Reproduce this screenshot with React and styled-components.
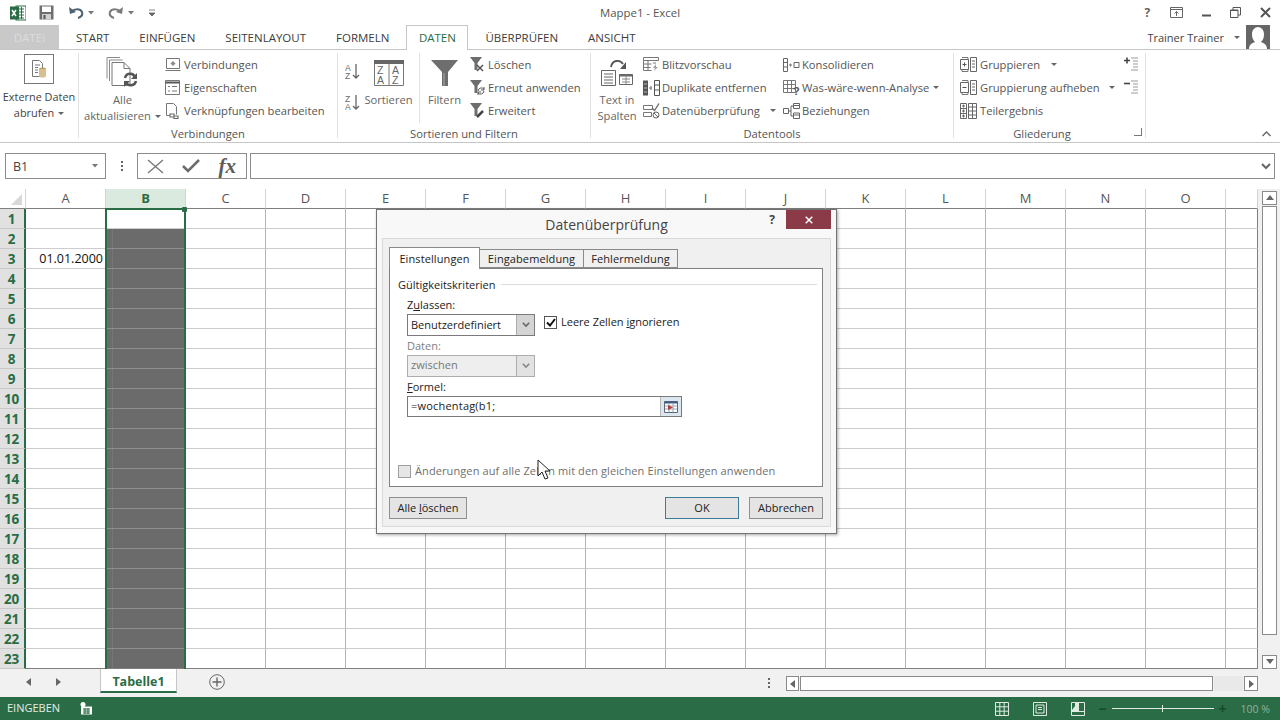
import styled, { createGlobalStyle } from 'styled-components';

const GlobalStyle = createGlobalStyle`
  html, body {
    margin: 0;
    padding: 0;
    background: #fff;
  }
  body {
    font-family: "Open Sans", "Liberation Sans", sans-serif;
    color: #444;
    overflow: hidden;
  }
`;

const green = '#2a6c45';

const Window = styled.div`
  position: relative;
  width: 1280px;
  height: 720px;
  display: flex;
  flex-direction: column;
  overflow: hidden;
  background: #fff;
  font-size: 11.2px;
`;

/* title bar */
const TitleBar = styled.div`
  height: 25px;
  display: grid;
  grid-template-columns: 1fr auto 1fr;
  align-items: center;
`;

const Qat = styled.div`
  display: grid;
  grid-template-columns: 29px 29px 40px 40px auto;
  padding-left: 10px;
  align-items: center;
`;

const QatItem = styled.div`
  display: flex;
  align-items: center;
  gap: 4px;
`;

const WindowTitle = styled.div`
  font-size: 11.4px;
  color: #555;
`;

const WindowButtons = styled.div`
  display: flex;
  justify-content: flex-end;
  align-items: center;
`;

const WindowButton = styled.span`
  width: 29.5px;
  display: flex;
  align-items: center;
  justify-content: center;
  font-weight: 700;
  font-size: 12px;
  color: #666;
`;

/* tabs */
const TabRow = styled.div`
  height: 25px;
  box-sizing: border-box;
  border-bottom: 1px solid #c6c6c6;
  display: flex;
  align-items: stretch;
  font-size: 11.5px;
`;

const FileTab = styled.div`
  width: 59px;
  background: #c9c9c9;
  color: #dcdcdc;
  display: flex;
  align-items: center;
  justify-content: center;
`;

const RibbonTab = styled.div`
  display: flex;
  align-items: center;
  padding: 0 ${({ $active }) => ($active ? '11.5px' : '15px')};
  margin-left: ${({ $ml }) => $ml || 0}px;
  color: #3c3c3c;
  ${({ $active }) => $active && `
    background: #fff;
    box-sizing: border-box;
    border: 1px solid #c6c6c6;
    border-bottom: none;
    height: 25px;
    padding-bottom: 2px;
    color: ${green};
  `}
`;

const UserBox = styled.div`
  margin-left: auto;
  display: flex;
  align-items: center;
  padding-right: 10px;
  gap: 6px;
  font-size: 11px;
  color: #444;
`;

/* ribbon */
const Ribbon = styled.div`
  height: 93px;
  box-sizing: border-box;
  border-bottom: 1px solid #c6c6c6;
  display: flex;
`;

const Group = styled.div`
  position: relative;
  box-sizing: border-box;
  width: ${({ $w }) => $w}px;
  margin: 3px 0 4px;
  border-right: 1px solid #e2e2e2;
  display: flex;
  flex-direction: column;
`;

const GroupBody = styled.div`
  height: 69px;
  display: flex;
  padding-left: ${({ $pl }) => $pl || 0}px;
  margin-bottom: 4px;
`;

const GroupLabel = styled.div`
  height: 16px;
  line-height: 16px;
  text-align: center;
  color: #555;
  padding-right: ${({ $pr }) => $pr || 0}px;
`;

const Launcher = styled.div`
  position: absolute;
  right: 3px;
  bottom: 2px;
  width: 7px;
  height: 7px;
  border-right: 1px solid #777;
  border-bottom: 1px solid #777;
`;

const LargeButton = styled.div`
  width: ${({ $w }) => $w}px;
  flex: none;
  display: flex;
  flex-direction: column;
  align-items: center;
  line-height: 16px;
  text-align: center;
  color: ${({ $dark }) => ($dark ? '#444' : '#666')};
  font-size: ${({ $dark }) => ($dark ? '10.9px' : 'inherit')};
  white-space: nowrap;
`;

const IconSlot = styled.div`
  height: ${({ $h }) => $h || 39}px;
  flex: none;
  display: flex;
  align-items: center;
  justify-content: center;
`;

const IconFrame = styled.div`
  width: 30px;
  height: 30px;
  box-sizing: border-box;
  border: 1px solid #777;
  margin-bottom: 4px;
  display: flex;
  align-items: center;
  justify-content: center;
`;

const SmallCol = styled.div`
  width: ${({ $w }) => ($w ? `${$w}px` : 'auto')};
  flex: none;
  margin-left: ${({ $ml }) => $ml || 0}px;
  display: flex;
  flex-direction: column;
`;

const SmallRow = styled.div`
  height: 23px;
  display: flex;
  align-items: center;
  color: #555;
  white-space: nowrap;
`;

const SmallIcon = styled.span`
  width: ${({ $w }) => $w || 19}px;
  flex: none;
  display: flex;
  align-items: center;
`;

const Caret = styled.i`
  display: inline-block;
  width: 0;
  height: 0;
  margin-left: ${({ $ml }) => $ml || 4}px;
  vertical-align: 2px;
  border-left: 3px solid transparent;
  border-right: 3px solid transparent;
  border-top: 3px solid #666;
`;

const SortCol = styled.div`
  width: 20px;
  flex: none;
  display: flex;
  flex-direction: column;
  gap: 14px;
  padding-top: 10px;
`;

const InnerSep = styled.div`
  width: 1px;
  height: 70px;
  margin: 0 8px 0 7px;
  background: #e2e2e2;
`;

const CollapseSlot = styled.div`
  flex: 1;
  display: flex;
  align-items: flex-end;
  justify-content: flex-end;
  padding: 0 9px 5px 0;
`;

/* formula bar */
const FormulaBar = styled.div`
  height: 45px;
  box-sizing: border-box;
  padding: 10px 5px 9px;
  display: flex;
  align-items: stretch;
`;

const NameBox = styled.div`
  width: 101px;
  box-sizing: border-box;
  border: 1px solid #8c8c8c;
  padding: 0 7px;
  display: flex;
  align-items: center;
  justify-content: space-between;
  font-size: 12.5px;
  color: #444;
`;

const Dots = styled.div`
  width: 31px;
  display: flex;
  flex-direction: column;
  align-items: center;
  justify-content: center;
  gap: 2px;
  i {
    width: 2px;
    height: 2px;
    background: #666;
  }
`;

const FormulaButtons = styled.div`
  width: 110px;
  box-sizing: border-box;
  border: 1px solid #8c8c8c;
  display: flex;
  align-items: center;
  justify-content: space-between;
  padding: 0 10px 0 9px;
`;

const FxMark = styled.span`
  font-family: "Liberation Serif", serif;
  font-style: italic;
  font-weight: 700;
  font-size: 21px;
  color: #5c5c5c;
`;

const FormulaInput = styled.div`
  flex: 1;
  margin-left: 3px;
  box-sizing: border-box;
  border: 1px solid #8c8c8c;
  display: flex;
  align-items: center;
  justify-content: flex-end;
  padding-right: 3px;
`;

/* sheet */
const SheetArea = styled.div`
  margin-top: 1px;
  height: 480px;
  display: flex;
`;

const Sheet = styled.div`
  position: relative;
  width: 1258px;
  height: 480px;
  box-sizing: border-box;
  display: grid;
  grid-template-columns: 26px repeat(15, 80px) 32px;
  grid-auto-rows: 20px;
  overflow: hidden;
`;

const Corner = styled.div`
  box-sizing: border-box;
  border-bottom: 1px solid #7f7f7f;
  border-right: 1px solid #d4d4d4;
  display: flex;
  align-items: flex-end;
  justify-content: flex-end;
  padding: 0 3px 3px 0;
  &::after {
    content: '';
    width: 0;
    height: 0;
    border-left: 11px solid transparent;
    border-bottom: 11px solid #d8d8d8;
  }
`;

const ColHead = styled.div`
  box-sizing: border-box;
  border-bottom: 1px solid #7f7f7f;
  border-right: 1px solid #d4d4d4;
  padding-bottom: 2px;
  display: flex;
  align-items: center;
  justify-content: center;
  font-size: 13px;
  background: ${({ $active }) => ($active ? '#dbeadf' : '#fff')};
  color: ${({ $active }) => ($active ? green : '#555')};
  font-weight: ${({ $active }) => ($active ? 700 : 400)};
`;

const RowHead = styled.div`
  box-sizing: border-box;
  background: #e1e1e1;
  border-right: 2px solid ${green};
  border-bottom: 1px solid #c8c8c8;
  display: flex;
  align-items: center;
  justify-content: center;
  padding-right: 1px;
  color: ${green};
  font-weight: 700;
  font-size: 13.5px;
  letter-spacing: -0.3px;
`;

const Cell = styled.div`
  box-sizing: border-box;
  border-right: 1px solid #b4b4b4;
  border-bottom: 1px solid #cdcdcd;
  display: flex;
  align-items: center;
  justify-content: flex-end;
  padding-right: 2px;
  color: #111;
  font-size: 12.5px;
  white-space: nowrap;
  ${({ $dark }) => $dark && `
    background: linear-gradient(90deg, #6b6b6b 6px, #777 6px, #777 7px, #6b6b6b 7px);
    border-right-color: #6b6b6b;
    border-bottom-color: #8e8e8e;
  `}
  ${({ $last }) => $last && 'border-right: 1px solid #7f7f7f;'}
  ${({ $bottom }) => $bottom && 'border-bottom: 1px solid #7f7f7f;'}
`;

const SelectionFrame = styled.div`
  position: absolute;
  left: 105px;
  top: 19px;
  width: 81px;
  height: 461px;
  box-sizing: border-box;
  border: 2px solid ${green};
  border-bottom: none;
  pointer-events: none;
  &::after {
    content: '';
    position: absolute;
    right: -3px;
    top: -3px;
    width: 5px;
    height: 5px;
    background: ${green};
    border-radius: 1px;
  }
`;

const VScroll = styled.div`
  width: 22px;
  box-sizing: border-box;
  padding: 2px 3px 0 4px;
  background: #f1f1f1;
  display: flex;
  flex-direction: column;
`;

const ScrollButton = styled.div`
  box-sizing: border-box;
  width: ${({ $w }) => $w || 15}px;
  height: ${({ $h }) => $h || 14}px;
  flex: none;
  background: #fff;
  border: 1px solid #8a8a8a;
  display: flex;
  align-items: center;
  justify-content: center;
  margin-top: ${({ $mt }) => ($mt ? 'auto' : '0')};
`;

const VThumb = styled.div`
  box-sizing: border-box;
  width: 15px;
  height: 429px;
  margin-top: 1px;
  background: #fff;
  border: 1px solid #8a8a8a;
`;

/* sheet tabs */
const SheetBar = styled.div`
  height: 28px;
  background: #f1f1f1;
  display: flex;
  align-items: flex-start;
`;

const SheetNav = styled.div`
  width: 100px;
  height: 26px;
  box-sizing: border-box;
  padding-left: 25px;
  display: flex;
  align-items: center;
  gap: 21px;
`;

const SheetTab = styled.div`
  width: 77px;
  height: 24px;
  box-sizing: border-box;
  background: #fff;
  border: 1px solid #c6c6c6;
  border-top: none;
  border-bottom: 2px solid ${green};
  padding-top: 2px;
  display: flex;
  align-items: center;
  justify-content: center;
  font-weight: 700;
  font-size: 12.5px;
  color: ${green};
`;

const AddSheet = styled.div`
  margin: 5px 0 0 32px;
  display: flex;
`;

const SplitDots = styled(Dots)`
  width: 4px;
  height: 28px;
  margin: 0 15px 0 auto;
`;

const HScroll = styled.div`
  width: 472px;
  height: 15px;
  margin: 7px 22px 0 0;
  display: flex;
  gap: 1px;
`;

const HThumb = styled.div`
  box-sizing: border-box;
  width: 413px;
  background: #fff;
  border: 1px solid #8a8a8a;
`;

const HTrack = styled.div`
  flex: 1;
  background: #e9e9e9;
`;

/* status bar */
const StatusBar = styled.div`
  height: 23px;
  background: ${green};
  color: #e4eee8;
  font-size: 11px;
  display: flex;
  align-items: center;
  padding-left: 7px;
`;

const StatusText = styled.span`
  width: 73px;
  padding-bottom: 2px;
`;

const StatusRight = styled.div`
  margin-left: auto;
  display: flex;
  align-items: center;
  padding-right: 10px;
`;

const ViewIcons = styled.div`
  display: flex;
  gap: 24px;
  margin-right: 14px;
`;

const ZoomBar = styled.div`
  display: flex;
  align-items: center;
  gap: 2px;
  margin-right: 14px;
  color: #174a2c;
  font-size: 14px;
  font-weight: 700;
`;

const ZoomTrack = styled.div`
  position: relative;
  width: 102px;
  height: 1px;
  margin: 0 3px;
  background: #dfeae3;
  &::after {
    content: '';
    position: absolute;
    left: 50px;
    top: -3px;
    width: 1px;
    height: 7px;
    background: #dfeae3;
  }
`;

const ZoomValue = styled.span`
  color: #8fb29d;
  font-size: 10.5px;
`;

/* dialog */
const Dialog = styled.div`
  position: absolute;
  left: 376px;
  top: 209px;
  width: 461px;
  height: 325px;
  box-sizing: border-box;
  background: #f8f8f8;
  border: 1px solid #737373;
  box-shadow: 1px 1px 3px rgba(0, 0, 0, 0.35);
  display: flex;
  flex-direction: column;
  font-size: 11px;
  color: #222;
`;

const DialogHead = styled.div`
  height: 28px;
  display: grid;
  grid-template-columns: 1fr auto 1fr;
`;

const DialogTitle = styled.div`
  font-size: 14px;
  color: #444;
  line-height: 30px;
`;

const DialogControls = styled.div`
  display: flex;
  justify-content: flex-end;
  align-items: flex-start;
  padding-right: 5px;
`;

const DialogHelp = styled.span`
  font-weight: 700;
  font-size: 12px;
  line-height: 19px;
  margin-right: 11px;
  color: #444;
`;

const CloseButton = styled.div`
  width: 45px;
  height: 19px;
  background: #8b3b47;
  display: flex;
  align-items: center;
  justify-content: center;
`;

const DialogInner = styled.div`
  flex: 1;
  margin: 0 5px 6px;
  box-sizing: border-box;
  background: #f0f0f0;
  border: 1px solid #d9d9d9;
  padding: 8px 7px 0 6px;
  display: flex;
  flex-direction: column;
`;

const DlgTabs = styled.div`
  height: 21px;
  display: flex;
  align-items: flex-end;
  position: relative;
  z-index: 1;
`;

const DlgTab = styled.div`
  box-sizing: border-box;
  width: ${({ $w }) => $w}px;
  height: ${({ $active }) => ($active ? 22 : 19)}px;
  margin-bottom: ${({ $active }) => ($active ? -1 : 0)}px;
  background: ${({ $active }) => ($active ? '#fff' : '#f0f0f0')};
  border: 1px solid #8a8a8a;
  border-bottom: ${({ $active }) => ($active ? 'none' : '1px solid #8a8a8a')};
  border-left-width: ${({ $active }) => ($active ? 1 : 0)}px;
  display: flex;
  align-items: center;
  justify-content: center;
  letter-spacing: 0.1px;
`;

const DlgPanel = styled.div`
  height: 219px;
  box-sizing: border-box;
  background: #fff;
  border: 1px solid #808080;
  padding: 8px 5px 7px 8px;
  display: flex;
  flex-direction: column;
`;

const Legend = styled.div`
  height: 16px;
  box-sizing: border-box;
  padding-bottom: 2px;
  display: flex;
  align-items: center;
  gap: 6px;
  &::after {
    content: '';
    flex: 1;
    height: 1px;
    background: #dcdcdc;
  }
`;

const Fields = styled.div`
  padding: 2px 0 0 9px;
`;

const FieldLabel = styled.div`
  height: 16px;
  line-height: 16px;
  margin: 2px 0 1px;
  color: ${({ $off }) => ($off ? '#808080' : '#222')};
`;

const FieldRow = styled.div`
  display: flex;
  gap: 9px;
`;

const Select = styled.div`
  box-sizing: border-box;
  width: 128px;
  height: 22px;
  border: 1px solid #7a7a7a;
  background: ${({ $off }) => ($off ? '#eeeeee' : '#fff')};
  color: ${({ $off }) => ($off ? '#777' : '#222')};
  border-color: ${({ $off }) => ($off ? '#adadad' : '#7a7a7a')};
  display: flex;
  align-items: center;
  justify-content: space-between;
  padding-left: 3px;
`;

const FieldText = styled.span`
  padding-bottom: ${({ $raise }) => $raise || 2}px;
  letter-spacing: ${({ $spaced }) => ($spaced ? '0.2px' : '0')};
`;

const SelectArrow = styled.div`
  width: 17px;
  height: 100%;
  background: ${({ $off }) => ($off ? '#e2e2e2' : '#d4d4d4')};
  border-left: 1px solid #adadad;
  display: flex;
  align-items: center;
  justify-content: center;
`;

const CheckRow = styled.div`
  height: 16px;
  display: flex;
  align-items: center;
  gap: 4px;
  color: ${({ $off }) => ($off ? '#6f6f6f' : '#222')};
  margin-top: ${({ $bottom }) => ($bottom ? 'auto' : '0')};
  white-space: nowrap;
`;

const CheckText = styled.span`
  padding-bottom: 2px;
  letter-spacing: ${({ $wide }) => ($wide ? '0.1px' : '0')};
`;

const CheckBox = styled.span`
  box-sizing: border-box;
  width: 13px;
  height: 13px;
  flex: none;
  border: 1px solid ${({ $off }) => ($off ? '#9e9e9e' : '#555')};
  background: ${({ $off }) => ($off ? '#e6e6e6' : '#fff')};
  display: flex;
  align-items: center;
  justify-content: center;
`;

const FormulaField = styled.div`
  box-sizing: border-box;
  width: 275px;
  height: 21px;
  border: 1px solid #7a7a7a;
  display: flex;
  align-items: center;
  justify-content: space-between;
  padding-left: 3px;
  color: #222;
`;

const RefButton = styled.div`
  width: 20px;
  height: 100%;
  background: #dbe6ef;
  border-left: 1px solid #b5b5b5;
  display: flex;
  align-items: center;
  justify-content: center;
`;

const DlgFooter = styled.div`
  margin-top: 10px;
  display: flex;
  gap: 10px;
`;

const DlgButton = styled.div`
  box-sizing: border-box;
  width: ${({ $w }) => $w || 74}px;
  height: 22px;
  padding-bottom: 2px;
  background: #e4e4e4;
  border: 1px solid ${({ $primary }) => ($primary ? '#3b7c99' : '#8f8f8f')};
  display: flex;
  align-items: center;
  justify-content: center;
  margin-left: ${({ $push }) => ($push ? 'auto' : '0')};
  color: #222;
`;

const Pointer = styled.svg`
  position: absolute;
  left: 537px;
  top: 459px;
`;

/* icons */
const ExcelLogo = () => (
  <svg width="16" height="16" viewBox="0 0 16 16">
    <rect x="6" y="1" width="10" height="14" fill="#fff" stroke={green} />
    <path d="M9 4h5M9 7h5M9 10h5M9 13h5M11.500 2v12" stroke={green} strokeWidth="1" />
    <rect x="0" y="1.500" width="9" height="13" fill={green} />
    <path d="M2 5l4 6M6 5l-4 6" stroke="#fff" strokeWidth="1.500" />
  </svg>
);

const SaveIcon = () => (
  <svg width="15" height="15" viewBox="0 0 15 15">
    <path d="M0.500 0.500h14v14h-14z" fill="#6e6e6e" />
    <rect x="3" y="1.500" width="9" height="5.500" fill="#fff" />
    <rect x="3" y="9" width="9" height="5.500" fill="#cfcfcf" />
    <rect x="4.500" y="10" width="2" height="4" fill="#555" />
  </svg>
);

const UndoIcon = ({ flip }) => (
  <svg width="16" height="13" viewBox="0 0 16 13" style={flip ? { transform: 'scaleX(-1)' } : undefined}>
    <path d="M3 6c2-3 9-4 11 0c1 3-1 5-4 6" fill="none" stroke={flip ? '#7a7a7a' : '#4d6272'} strokeWidth="2" />
    <path d="M1 1l1 7l6-2z" fill={flip ? '#7a7a7a' : '#4d6272'} />
  </svg>
);

const QatMenu = () => (
  <svg width="8" height="8" viewBox="0 0 8 8">
    <path d="M1 1h6M1 4h6l-3 3z" fill="#666" stroke="#666" strokeWidth="0.800" />
  </svg>
);

const TinyCaret = () => (
  <svg width="6" height="4" viewBox="0 0 6 4">
    <path d="M0 0h6L3 3.500z" fill="#777" />
  </svg>
);

const RibbonOptions = () => (
  <svg width="13" height="11" viewBox="0 0 13 11">
    <path d="M0.500 0.500h12v10h-12zM0.500 2.500h12" fill="none" stroke="#666" />
    <path d="M6.500 9V4.500M4.500 6.500l2-2l2 2" fill="none" stroke="#666" />
  </svg>
);

const MinIcon = () => (
  <svg width="15" height="11" viewBox="0 0 15 11">
    <path d="M3 8.500h9" stroke="#555" strokeWidth="2" />
  </svg>
);

const RestoreIcon = () => (
  <svg width="11" height="11" viewBox="0 0 11 11">
    <path d="M0.500 3h7.500v7.500H0.500zM3 3V0.500h7.500V8H8" fill="none" stroke="#555" />
    <path d="M0.500 3.500H8" stroke="#555" />
  </svg>
);

const CloseIcon = ({ color = '#555', size = 11 }) => (
  <svg width={size} height={size} viewBox="0 0 11 11">
    <path d="M1 1l9 9M10 1l-9 9" stroke={color} strokeWidth="2" />
  </svg>
);

const Avatar = () => (
  <svg width="24" height="24" viewBox="0 0 24 24">
    <rect width="24" height="24" fill="#666" />
    <path d="M3 24c0-5 4-6 6-7c-2-2-3-4-3-8c0-4 3-7 6-7s6 3 6 7c0 4-1 6-3 8c2 1 6 2 6 7z" fill="#fff" />
  </svg>
);

const ExternalDataIcon = () => (
  <svg width="18" height="20" viewBox="0 0 18 20">
    <path d="M2.500 1.500h7l3 3v13h-10z" fill="#fff" stroke="#777" />
    <path d="M5 6h5M5 8.500h3M5 11h3M5 13.500h3" stroke="#777" />
    <ellipse cx="12.500" cy="10" rx="3.500" ry="1.500" fill="#b99b62" />
    <path d="M9 10h7v7c0 2-7 2-7 0z" fill="#d8bf8e" />
  </svg>
);

const RefreshAllIcon = () => (
  <svg width="33" height="33" viewBox="0 0 33 33">
    <path d="M1 1.500h13M1 1.500v21M3.500 4h13M3.500 4v21" fill="none" stroke="#8a8a8a" />
    <path d="M6 6.500h12l6 6v17H6z" fill="#fff" stroke="#777" />
    <path d="M18 6.500v6h6" fill="none" stroke="#777" />
    <path d="M19 22c1-5 8-6 10-1" fill="none" stroke="#555" strokeWidth="2.500" />
    <path d="M31 17v6h-6z" fill="#555" />
    <path d="M30 25c-1 5-8 6-10 1" fill="none" stroke="#555" strokeWidth="2.500" />
    <path d="M18 31v-6h6z" fill="#555" />
  </svg>
);

const ConnectionsIcon = () => (
  <svg width="16" height="14" viewBox="0 0 16 14">
    <path d="M1.500 0.500h13v10h-13zM0.500 12.500h15" fill="none" stroke="#777" />
    <path d="M8 3l2.500 2.500L8 8L5.500 5.500z" fill="#8a8a8a" />
  </svg>
);

const PropertiesIcon = () => (
  <svg width="15" height="15" viewBox="0 0 15 15">
    <path d="M0.500 0.500h14v14h-14z" fill="#fff" stroke="#777" />
    <path d="M0.500 2.500h14" stroke="#555" strokeWidth="2" />
    <path d="M3 6.500h2M3 11h2M7 6.500h5M7 11h5" stroke="#777" />
  </svg>
);

const EditLinksIcon = () => (
  <svg width="15" height="16" viewBox="0 0 15 16">
    <path d="M1.500 0.500h7l3 3v8M1.500 0.500v12h3" fill="none" stroke="#777" />
    <path d="M5 11h4v3H5zM9 13h4v2.500H9z" fill="none" stroke="#6a6a6a" strokeWidth="1.200" />
  </svg>
);

const SortGlyph = ({ top, bottom }) => (
  <svg width="16" height="17" viewBox="0 0 16 17">
    <text x="0" y="8" fontSize="8.500" fontFamily="Liberation Sans" fill="#6a6a6a">{top}</text>
    <text x="0" y="16" fontSize="8.500" fontFamily="Liberation Sans" fill="#6a6a6a">{bottom}</text>
    <path d="M11 1v14M8 12l3 3l3-3" fill="none" stroke="#666" strokeWidth="1.300" />
  </svg>
);

const SortDialogIcon = () => (
  <svg width="30" height="26" viewBox="0 0 30 26">
    <path d="M0.500 0.500h29v25h-29zM15 3v22" fill="#fff" stroke="#777" />
    <rect x="0" y="0" width="30" height="4" fill="#666" />
    <text x="3" y="14" fontSize="10.500" fontFamily="Liberation Sans" fill="#666">Z</text>
    <text x="3" y="24" fontSize="10.500" fontFamily="Liberation Sans" fill="#666">A</text>
    <text x="18" y="14" fontSize="10.500" fontFamily="Liberation Sans" fill="#666">A</text>
    <text x="18" y="24" fontSize="10.500" fontFamily="Liberation Sans" fill="#666">Z</text>
  </svg>
);

const FunnelIcon = () => (
  <svg width="29" height="28" viewBox="0 0 29 28">
    <path d="M1 1h27L18 13v14h-6V13z" fill="#6e6e6e" />
    <path d="M14 14v13" stroke="#a8a8a8" />
  </svg>
);

const SmallFunnel = ({ mark }) => (
  <svg width="16" height="17" viewBox="0 0 16 17">
    <path d="M0 1h12L7.500 7v7H4.500V7z" fill="#6e6e6e" />
    {mark === 'x' && <path d="M7 9l6 6M13 9l-6 6" stroke="#555" strokeWidth="1.500" />}
    {mark === 'r' && <path d="M8 12a3.500 3.500 0 0 1 6-2M14 12a3.500 3.500 0 0 1-6 2M14 8v3h-3M8 16v-3h3" fill="none" stroke="#555" />}
    {mark === 'p' && <path d="M7 15l6-6" stroke="#444" strokeWidth="2.500" />}
  </svg>
);

const TextColumnsIcon = () => (
  <svg width="32" height="28" viewBox="0 0 32 28">
    <path d="M10 8c1-7 9-8 12-3" fill="none" stroke="#555" strokeWidth="1.800" />
    <path d="M25 3v7h-6z" fill="#555" />
    <path d="M0.500 11.500h14v15h-14z" fill="#fff" stroke="#666" />
    <path d="M3 15h9M3 18h9M3 21h9M3 24h9" stroke="#666" />
    <path d="M18.500 15.500h13v10h-13z" fill="#fff" stroke="#666" />
    <path d="M18.500 16.500h13" stroke="#666" strokeWidth="2" />
    <path d="M25 16v9M21 20h8M21 23h8" stroke="#888" />
  </svg>
);

const FlashFillIcon = () => (
  <svg width="17" height="15" viewBox="0 0 17 15">
    <path d="M0.500 0.500h15v3h-15zM0.500 3.500v10h8M5 3.500v10M0.500 7h8M0.500 10.500h7M10 6h3" fill="none" stroke="#777" />
    <path d="M13 7l-3 4h2l-1 3l4-4h-2z" fill="#a0a0a0" />
  </svg>
);

const DuplicatesIcon = () => (
  <svg width="17" height="16" viewBox="0 0 17 16">
    <rect x="0" y="0.500" width="5" height="15" fill="#555" />
    <path d="M1 4h3M1 8h3M1 12h3" stroke="#bbb" />
    <path d="M6 8h3M8 6v4" stroke="#777" />
    <path d="M11.500 0.500h5v15h-5zM11.500 5h5M11.500 10h5" fill="#fff" stroke="#555" />
  </svg>
);

const ValidationIcon = () => (
  <svg width="17" height="16" viewBox="0 0 17 16">
    <path d="M0.500 2.500h9v4h-9zM0.500 9.500h8v4h-8z" fill="none" stroke="#777" />
    <path d="M9 5l2.500 2.500L16 0.500" fill="none" stroke="#666" strokeWidth="1.300" />
    <circle cx="13" cy="12" r="3" fill="#fff" stroke="#666" />
    <path d="M11 10l4 4" stroke="#666" />
  </svg>
);

const ConsolidateIcon = () => (
  <svg width="17" height="14" viewBox="0 0 17 14">
    <path d="M0.500 0.500h4v13h-4zM0.500 4.500h4M0.500 9h4" fill="none" stroke="#666" />
    <path d="M6 7h3M7.500 5.500v3" stroke="#777" />
    <path d="M11 4.500h5v5h-5z" fill="none" stroke="#666" />
  </svg>
);

const WhatIfIcon = () => (
  <svg width="17" height="15" viewBox="0 0 17 15">
    <path d="M0.500 0.500h12v12h-12zM0.500 4.500h12M0.500 8.500h12M4.500 0.500v12M8.500 0.500v12" fill="none" stroke="#777" />
    <text x="10" y="14.500" fontSize="11" fontWeight="700" fontFamily="Liberation Sans" fill="#555">?</text>
  </svg>
);

const RelationsIcon = () => (
  <svg width="17" height="16" viewBox="0 0 17 16">
    <path d="M0.500 5.500h5v5h-5zM10.500 0.500h6v5h-6zM10.500 10h6v5.500h-6zM10.500 2.500h6M10.500 12h6" fill="#fff" stroke="#666" />
    <path d="M5.500 8h2.500V3h2.500M8 8v5h2.500" fill="none" stroke="#666" />
  </svg>
);

const GroupIcon = ({ mark = '+' }) => (
  <svg width="17" height="15" viewBox="0 0 17 15">
    <path d="M2 0.500h6v2M8 12.500v2H2v-2" fill="none" stroke="#777" />
    <path d="M0.500 2.500h8v10h-8z" fill="#fff" stroke="#666" />
    <path d={mark === '+' ? 'M2.500 7.500h4M4.500 5.500v4' : 'M2.500 7.500h4'} stroke="#555" />
    <path d="M10.500 0.500h6v14h-6zM12 4h3M12 7h3M12 10h3" fill="none" stroke="#666" />
  </svg>
);

const SubtotalIcon = () => (
  <svg width="17" height="16" viewBox="0 0 17 16">
    <path d="M0.500 0.500h6v15h-6zM0.500 5.500h6M0.500 10.500h6" fill="none" stroke="#666" />
    <path d="M2 3h3M3.500 1.500v3M2 8h3M3.500 6.500v3M2 13h3M3.500 11.500v3" stroke="#666" />
    <path d="M8.500 0.500h8v15h-8zM8.500 4h8M8.500 8h8M8.500 12h8M12.500 0.500v15" fill="none" stroke="#666" />
  </svg>
);

const OutlineIcon = ({ mark }) => (
  <svg width="15" height="15" viewBox="0 0 15 15">
    <path d={mark === '+' ? 'M0 3.500h6M3 0.500v6' : 'M0 3.500h6'} stroke="#444" strokeWidth="1.600" />
    <path d="M7 1h7M9 4h5M9 7h5M9 10h5M7 13h7" stroke="#999" />
  </svg>
);

const ChevronUp = () => (
  <svg width="9" height="6" viewBox="0 0 9 6">
    <path d="M0.500 5L4.500 1l4 4" fill="none" stroke="#666" strokeWidth="1.400" />
  </svg>
);

const ChevronDown = ({ color = '#666', size = 10 }) => (
  <svg width={size} height={size * 0.7} viewBox="0 0 10 7">
    <path d="M1 1l4 4l4-4" fill="none" stroke={color} strokeWidth="2" />
  </svg>
);

const FormulaCheck = () => (
  <svg width="18" height="14" viewBox="0 0 18 14">
    <path d="M1 7l5 5L17 1" fill="none" stroke="#6c6c6c" strokeWidth="2.600" />
  </svg>
);

const FormulaCross = () => (
  <svg width="17" height="15" viewBox="0 0 17 15">
    <path d="M1 1l15 13M16 1L1 14" fill="none" stroke="#777" strokeWidth="1.300" />
  </svg>
);

const Arrow = ({ dir, color = '#666' }) => {
  const paths = {
    up: 'M4 1l4 5H0z',
    down: 'M0 1h8L4 6z',
    left: 'M6 0v8L1 4z',
    right: 'M2 0v8l5-4z',
  };
  return (
    <svg width="8" height="8" viewBox="0 0 8 8">
      <path d={paths[dir]} fill={color} />
    </svg>
  );
};

const AddIcon = () => (
  <svg width="16" height="16" viewBox="0 0 16 16">
    <circle cx="8" cy="8" r="7.300" fill="none" stroke="#666" />
    <path d="M3.500 8h9M8 3.500v9" stroke="#666" strokeWidth="1.400" />
  </svg>
);

const MacroIcon = () => (
  <svg width="13" height="13" viewBox="0 0 13 13">
    <circle cx="3" cy="2.500" r="2.500" fill="#fff" />
    <path d="M1 4.500h11v8H1z" fill="#fff" />
    <path d="M3 7h7M3 9h7M3 11h7M5 6v6M8 6v6" stroke={green} />
  </svg>
);

const NormalViewIcon = () => (
  <svg width="14" height="14" viewBox="0 0 14 14">
    <path d="M0.500 0.500h13v13h-13zM0.500 4.800h13M0.500 9.200h13M4.800 0.500v13M9.200 0.500v13" fill="none" stroke="#dfeae3" />
  </svg>
);

const PageViewIcon = () => (
  <svg width="14" height="14" viewBox="0 0 14 14">
    <path d="M0.500 0.500h13v13h-13zM3 3h8v8H3zM5 5.500h4M5 7.500h4" fill="none" stroke="#dfeae3" />
  </svg>
);

const BreakViewIcon = () => (
  <svg width="14" height="14" viewBox="0 0 14 14">
    <path d="M0.500 0.500h13v13h-13z" fill="none" stroke="#dfeae3" />
    <path d="M4 1h4v8H4zM1 8l3-4v5H1z" fill="#dfeae3" />
    <path d="M0.500 9.500h13" stroke="#dfeae3" />
  </svg>
);

const CheckMark = () => (
  <svg width="10" height="9" viewBox="0 0 10 9">
    <path d="M1 4.500L4 7.500L9 1" fill="none" stroke="#111" strokeWidth="2" />
  </svg>
);

const RefIcon = () => (
  <svg width="14" height="12" viewBox="0 0 14 12">
    <path d="M0.500 0.500h13v11h-13z" fill="#fff" stroke="#5a6a7c" />
    <path d="M0.500 1.500h13" stroke="#3f5a80" strokeWidth="2" />
    <path d="M1 5h12M1 8h12M5 3v8M9 3v8" stroke="#9aa7b5" />
    <path d="M4 4l5 2.500L4 9z" fill="#b33a3a" />
  </svg>
);

const columns = ['A', 'B', 'C', 'D', 'E', 'F', 'G', 'H', 'I', 'J', 'K', 'L', 'M', 'N', 'O', ''];
const rows = Array.from({ length: 23 }, (_, i) => i + 1);

const SmallAction = ({ icon, iconWidth, children }) => (
  <SmallRow>
    <SmallIcon $w={iconWidth}>{icon}</SmallIcon>
    {children}
  </SmallRow>
);

const App = () => {
  return (
    <Window>
      <GlobalStyle />

      <TitleBar>
        <Qat>
          <ExcelLogo />
          <SaveIcon />
          <QatItem><UndoIcon /><TinyCaret /></QatItem>
          <QatItem><UndoIcon flip /><TinyCaret /></QatItem>
          <QatMenu />
        </Qat>
        <WindowTitle>Mappe1 - Excel</WindowTitle>
        <WindowButtons>
          <WindowButton>?</WindowButton>
          <WindowButton><RibbonOptions /></WindowButton>
          <WindowButton><MinIcon /></WindowButton>
          <WindowButton><RestoreIcon /></WindowButton>
          <WindowButton><CloseIcon /></WindowButton>
        </WindowButtons>
      </TitleBar>

      <TabRow>
        <FileTab>DATEI</FileTab>
        <RibbonTab $ml={2}>START</RibbonTab>
        <RibbonTab>EINFÜGEN</RibbonTab>
        <RibbonTab>SEITENLAYOUT</RibbonTab>
        <RibbonTab>FORMELN</RibbonTab>
        <RibbonTab $active $ml={2}>DATEN</RibbonTab>
        <RibbonTab $ml={2}>ÜBERPRÜFEN</RibbonTab>
        <RibbonTab>ANSICHT</RibbonTab>
        <UserBox>
          Trainer Trainer
          <Caret />
          <Avatar />
        </UserBox>
      </TabRow>

      <Ribbon>
        <Group $w={79}>
          <GroupBody>
            <LargeButton $w={78} $dark>
              <IconSlot $h={36}>
                <IconFrame><ExternalDataIcon /></IconFrame>
              </IconSlot>
              Externe Daten
              <span>abrufen<Caret /></span>
            </LargeButton>
          </GroupBody>
        </Group>

        <Group $w={259}>
          <GroupBody $pl={6}>
            <LargeButton $w={75}>
              <IconSlot><RefreshAllIcon /></IconSlot>
              Alle
              <span>aktualisieren<Caret /></span>
            </LargeButton>
            <SmallCol $ml={5}>
              <SmallAction icon={<ConnectionsIcon />}>Verbindungen</SmallAction>
              <SmallAction icon={<PropertiesIcon />}>Eigenschaften</SmallAction>
              <SmallAction icon={<EditLinksIcon />}>Verknüpfungen bearbeiten</SmallAction>
            </SmallCol>
          </GroupBody>
          <GroupLabel>Verbindungen</GroupLabel>
        </Group>

        <Group $w={253}>
          <GroupBody $pl={7}>
            <SortCol>
              <SortGlyph top="A" bottom="Z" />
              <SortGlyph top="Z" bottom="A" />
            </SortCol>
            <LargeButton $w={47}>
              <IconSlot><SortDialogIcon /></IconSlot>
              Sortieren
            </LargeButton>
            <InnerSep />
            <LargeButton $w={33}>
              <IconSlot><FunnelIcon /></IconSlot>
              Filtern
            </LargeButton>
            <SmallCol $ml={9}>
              <SmallAction iconWidth={18} icon={<SmallFunnel mark="x" />}>Löschen</SmallAction>
              <SmallAction iconWidth={18} icon={<SmallFunnel mark="r" />}>Erneut anwenden</SmallAction>
              <SmallAction iconWidth={18} icon={<SmallFunnel mark="p" />}>Erweitert</SmallAction>
            </SmallCol>
          </GroupBody>
          <GroupLabel>Sortieren und Filtern</GroupLabel>
        </Group>

        <Group $w={363}>
          <GroupBody $pl={5}>
            <LargeButton $w={42}>
              <IconSlot><TextColumnsIcon /></IconSlot>
              Text in
              <span>Spalten</span>
            </LargeButton>
            <SmallCol $ml={5} $w={140}>
              <SmallAction icon={<FlashFillIcon />}>Blitzvorschau</SmallAction>
              <SmallAction icon={<DuplicatesIcon />}>Duplikate entfernen</SmallAction>
              <SmallAction icon={<ValidationIcon />}>Datenüberprüfung<Caret $ml={10} /></SmallAction>
            </SmallCol>
            <SmallCol>
              <SmallAction icon={<ConsolidateIcon />}>Konsolidieren</SmallAction>
              <SmallAction icon={<WhatIfIcon />}>Was-wäre-wenn-Analyse<Caret $ml={4} /></SmallAction>
              <SmallAction icon={<RelationsIcon />}>Beziehungen</SmallAction>
            </SmallCol>
          </GroupBody>
          <GroupLabel>Datentools</GroupLabel>
        </Group>

        <Group $w={192}>
          <GroupBody $pl={6}>
            <SmallCol $w={164}>
              <SmallAction iconWidth={20} icon={<GroupIcon />}>Gruppieren<Caret $ml={11} /></SmallAction>
              <SmallAction iconWidth={20} icon={<GroupIcon mark="-" />}>Gruppierung aufheben<Caret $ml={9} /></SmallAction>
              <SmallAction iconWidth={20} icon={<SubtotalIcon />}>Teilergebnis</SmallAction>
            </SmallCol>
            <SmallCol>
              <SmallAction icon={<OutlineIcon mark="+" />} />
              <SmallAction icon={<OutlineIcon mark="-" />} />
            </SmallCol>
          </GroupBody>
          <GroupLabel $pr={15}>Gliederung</GroupLabel>
          <Launcher />
        </Group>

        <CollapseSlot><ChevronUp /></CollapseSlot>
      </Ribbon>

      <FormulaBar>
        <NameBox>B1<TinyCaret /></NameBox>
        <Dots><i /><i /><i /></Dots>
        <FormulaButtons>
          <FormulaCross />
          <FormulaCheck />
          <FxMark>fx</FxMark>
        </FormulaButtons>
        <FormulaInput><ChevronDown /></FormulaInput>
      </FormulaBar>

      <SheetArea>
        <Sheet>
          <Corner />
          {columns.map((col) => (
            <ColHead key={col} $active={col === 'B'}>{col}</ColHead>
          ))}
          {rows.map((row) => [
            <RowHead key={`h${row}`}>{row}</RowHead>,
            ...columns.map((col, i) => (
              <Cell
                key={`${col}${row}`}
                $dark={col === 'B' && row > 1}
                $last={i === columns.length - 1}
                $bottom={row === 23}
              >
                {col === 'A' && row === 3 ? '01.01.2000' : ''}
              </Cell>
            )),
          ])}
          <SelectionFrame />
        </Sheet>
        <VScroll>
          <ScrollButton><Arrow dir="up" /></ScrollButton>
          <VThumb />
          <ScrollButton $mt><Arrow dir="down" /></ScrollButton>
        </VScroll>
      </SheetArea>

      <SheetBar>
        <SheetNav>
          <Arrow dir="left" />
          <Arrow dir="right" />
        </SheetNav>
        <SheetTab>Tabelle1</SheetTab>
        <AddSheet><AddIcon /></AddSheet>
        <SplitDots><i /><i /><i /></SplitDots>
        <HScroll>
          <ScrollButton $w={13} $h={15}><Arrow dir="left" /></ScrollButton>
          <HThumb />
          <HTrack />
          <ScrollButton $w={14} $h={15}><Arrow dir="right" /></ScrollButton>
        </HScroll>
      </SheetBar>

      <StatusBar>
        <StatusText>EINGEBEN</StatusText>
        <MacroIcon />
        <StatusRight>
          <ViewIcons>
            <NormalViewIcon />
            <PageViewIcon />
            <BreakViewIcon />
          </ViewIcons>
          <ZoomBar>
            −<ZoomTrack />+
          </ZoomBar>
          <ZoomValue>100 %</ZoomValue>
        </StatusRight>
      </StatusBar>

      <Dialog>
        <DialogHead>
          <span />
          <DialogTitle>Datenüberprüfung</DialogTitle>
          <DialogControls>
            <DialogHelp>?</DialogHelp>
            <CloseButton><CloseIcon color="#fff" size={8} /></CloseButton>
          </DialogControls>
        </DialogHead>
        <DialogInner>
          <DlgTabs>
            <DlgTab $w={91} $active>Einstellungen</DlgTab>
            <DlgTab $w={104}>Eingabemeldung</DlgTab>
            <DlgTab $w={94}>Fehlermeldung</DlgTab>
          </DlgTabs>
          <DlgPanel>
            <Legend>Gültigkeitskriterien</Legend>
            <Fields>
              <FieldLabel>Z<u>u</u>lassen:</FieldLabel>
              <FieldRow>
                <Select>
                  <FieldText>Benutzerdefiniert</FieldText>
                  <SelectArrow><ChevronDown size={8} /></SelectArrow>
                </Select>
                <CheckRow>
                  <CheckBox><CheckMark /></CheckBox>
                  <CheckText>Leere Zellen <u>i</u>gnorieren</CheckText>
                </CheckRow>
              </FieldRow>
              <FieldLabel $off>Daten:</FieldLabel>
              <Select $off>
                <FieldText $raise={4}>zwischen</FieldText>
                <SelectArrow $off><ChevronDown size={8} color="#888" /></SelectArrow>
              </Select>
              <FieldLabel><u>F</u>ormel:</FieldLabel>
              <FormulaField>
                <FieldText $spaced>=wochentag(b1;</FieldText>
                <RefButton><RefIcon /></RefButton>
              </FormulaField>
            </Fields>
            <CheckRow $off $bottom>
              <CheckBox $off />
              <CheckText $wide>Änderungen auf alle Zellen mit den gleichen Einstellungen anwenden</CheckText>
            </CheckRow>
          </DlgPanel>
          <DlgFooter>
            <DlgButton $w={78}><span>Alle <u>l</u>öschen</span></DlgButton>
            <DlgButton $push $primary>OK</DlgButton>
            <DlgButton>Abbrechen</DlgButton>
          </DlgFooter>
        </DialogInner>
      </Dialog>

      <Pointer width="14" height="21" viewBox="0 0 14 21">
        <path d="M1 1v16l4-4l3 7l3-1l-3-7h5z" fill="#fff" stroke="#222" />
      </Pointer>
    </Window>
  );
};

export default App;
